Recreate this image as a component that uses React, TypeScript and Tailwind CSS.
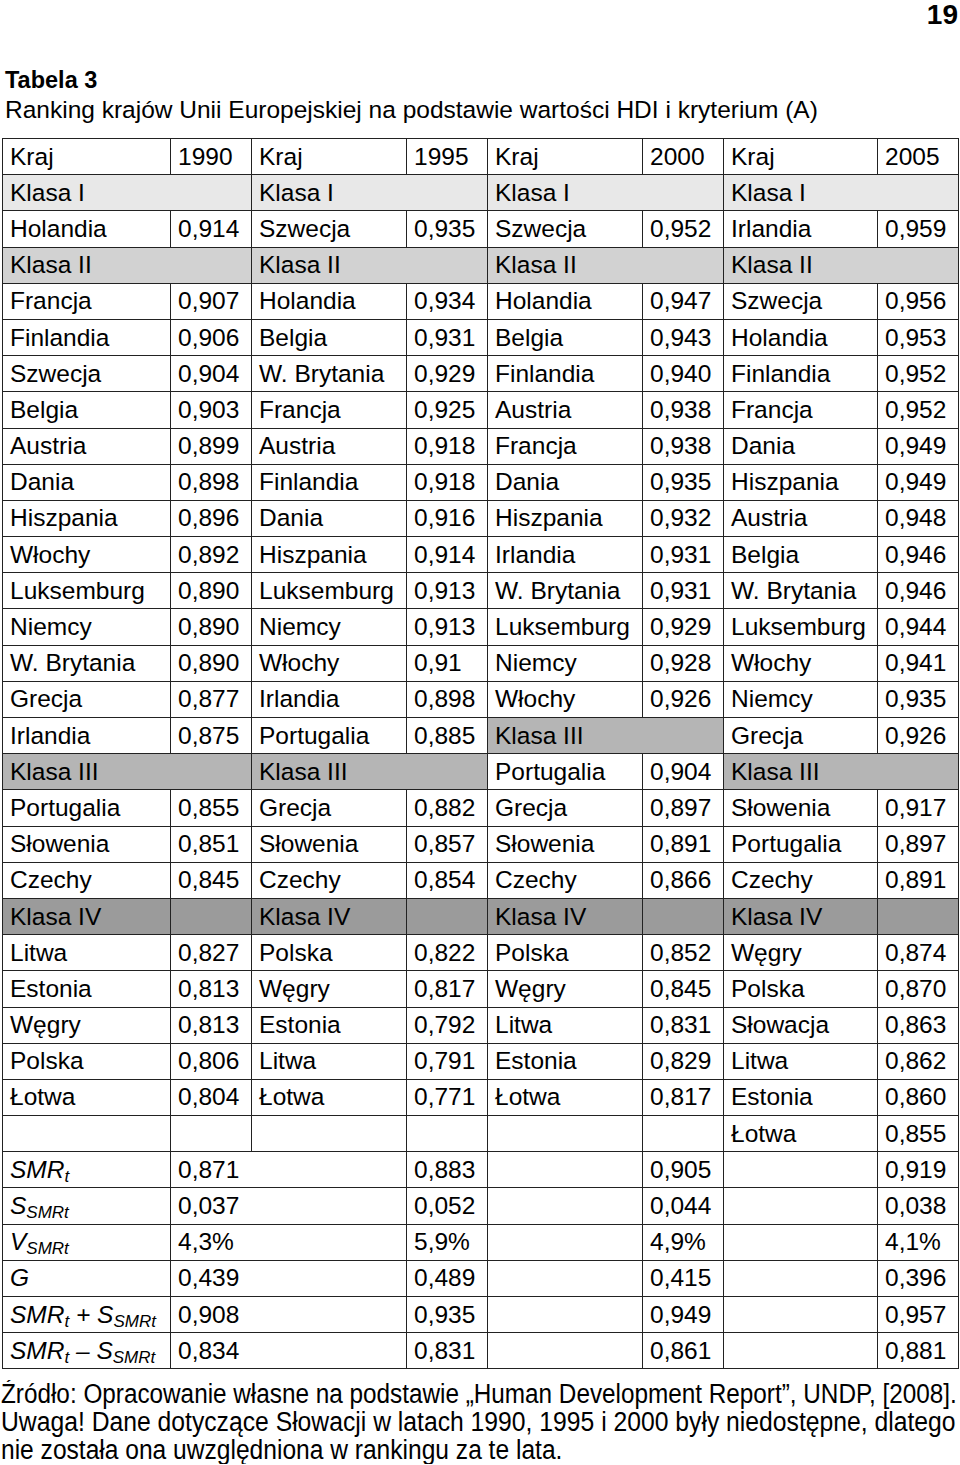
import type { ReactNode } from 'react';

type Cell = { t?: ReactNode; span?: number; bg?: string };

const K1 = 'bg-[#e8e8e8]';
const K2 = 'bg-[#d2d2d2]';
const K3 = 'bg-[#b5b5b5]';
const K4 = 'bg-[#9b9b9b]';

const plain = (...vals: string[]): Cell[] => vals.map((t) => ({ t }));
const klasa = (name: string, bg: string): Cell[] => [
  { t: name, span: 2, bg },
  { t: name, span: 2, bg },
  { t: name, span: 2, bg },
  { t: name, span: 2, bg },
];

const Sub = ({ children }: { children: ReactNode }) => (
  <sub className="text-[17px] italic">{children}</sub>
);

const SMRt = (
  <>
    SMR<Sub>t</Sub>
  </>
);
const SSMRt = (
  <>
    S<Sub>SMRt</Sub>
  </>
);

// wiersze statystyk: brak linii między 2. i 3. kolumną
const stat = (label: ReactNode, a: string, b: string, c: string, d: string): Cell[] => [
  { t: <span className="italic">{label}</span> },
  { t: a, span: 2 },
  { t: b },
  { t: '' },
  { t: c },
  { t: '' },
  { t: d },
];

const rows: Cell[][] = [
  plain('Kraj', '1990', 'Kraj', '1995', 'Kraj', '2000', 'Kraj', '2005'),
  klasa('Klasa I', K1),
  plain('Holandia', '0,914', 'Szwecja', '0,935', 'Szwecja', '0,952', 'Irlandia', '0,959'),
  klasa('Klasa II', K2),
  plain('Francja', '0,907', 'Holandia', '0,934', 'Holandia', '0,947', 'Szwecja', '0,956'),
  plain('Finlandia', '0,906', 'Belgia', '0,931', 'Belgia', '0,943', 'Holandia', '0,953'),
  plain('Szwecja', '0,904', 'W. Brytania', '0,929', 'Finlandia', '0,940', 'Finlandia', '0,952'),
  plain('Belgia', '0,903', 'Francja', '0,925', 'Austria', '0,938', 'Francja', '0,952'),
  plain('Austria', '0,899', 'Austria', '0,918', 'Francja', '0,938', 'Dania', '0,949'),
  plain('Dania', '0,898', 'Finlandia', '0,918', 'Dania', '0,935', 'Hiszpania', '0,949'),
  plain('Hiszpania', '0,896', 'Dania', '0,916', 'Hiszpania', '0,932', 'Austria', '0,948'),
  plain('Włochy', '0,892', 'Hiszpania', '0,914', 'Irlandia', '0,931', 'Belgia', '0,946'),
  plain('Luksemburg', '0,890', 'Luksemburg', '0,913', 'W. Brytania', '0,931', 'W. Brytania', '0,946'),
  plain('Niemcy', '0,890', 'Niemcy', '0,913', 'Luksemburg', '0,929', 'Luksemburg', '0,944'),
  plain('W. Brytania', '0,890', 'Włochy', '0,91', 'Niemcy', '0,928', 'Włochy', '0,941'),
  plain('Grecja', '0,877', 'Irlandia', '0,898', 'Włochy', '0,926', 'Niemcy', '0,935'),
  [
    ...plain('Irlandia', '0,875', 'Portugalia', '0,885'),
    { t: 'Klasa III', span: 2, bg: K3 },
    ...plain('Grecja', '0,926'),
  ],
  [
    { t: 'Klasa III', span: 2, bg: K3 },
    { t: 'Klasa III', span: 2, bg: K3 },
    ...plain('Portugalia', '0,904'),
    { t: 'Klasa III', span: 2, bg: K3 },
  ],
  plain('Portugalia', '0,855', 'Grecja', '0,882', 'Grecja', '0,897', 'Słowenia', '0,917'),
  plain('Słowenia', '0,851', 'Słowenia', '0,857', 'Słowenia', '0,891', 'Portugalia', '0,897'),
  plain('Czechy', '0,845', 'Czechy', '0,854', 'Czechy', '0,866', 'Czechy', '0,891'),
  [
    { t: 'Klasa IV', bg: K4 },
    { t: '', bg: K4 },
    { t: 'Klasa IV', bg: K4 },
    { t: '', bg: K4 },
    { t: 'Klasa IV', bg: K4 },
    { t: '', bg: K4 },
    { t: 'Klasa IV', bg: K4 },
    { t: '', bg: K4 },
  ],
  plain('Litwa', '0,827', 'Polska', '0,822', 'Polska', '0,852', 'Węgry', '0,874'),
  plain('Estonia', '0,813', 'Węgry', '0,817', 'Węgry', '0,845', 'Polska', '0,870'),
  plain('Węgry', '0,813', 'Estonia', '0,792', 'Litwa', '0,831', 'Słowacja', '0,863'),
  plain('Polska', '0,806', 'Litwa', '0,791', 'Estonia', '0,829', 'Litwa', '0,862'),
  plain('Łotwa', '0,804', 'Łotwa', '0,771', 'Łotwa', '0,817', 'Estonia', '0,860'),
  plain('', '', '', '', '', '', 'Łotwa', '0,855'),
  stat(SMRt, '0,871', '0,883', '0,905', '0,919'),
  stat(SSMRt, '0,037', '0,052', '0,044', '0,038'),
  stat(<>V<Sub>SMRt</Sub></>, '4,3%', '5,9%', '4,9%', '4,1%'),
  stat('G', '0,439', '0,489', '0,415', '0,396'),
  stat(<>{SMRt} + {SSMRt}</>, '0,908', '0,935', '0,949', '0,957'),
  stat(<>{SMRt} – {SSMRt}</>, '0,834', '0,831', '0,861', '0,881'),
];

const widths = [168, 81, 155, 81, 155, 81, 154, 81];

export default function App() {
  return (
    <div className="w-[960px] bg-white text-black font-['Liberation_Sans',Arial,sans-serif]">
      <div className="flex justify-end pr-[2px] text-[28px] font-bold leading-[30px]">19</div>

      <div className="pl-[5px] mt-[35px] text-[24px] leading-[30px]">
        <div className="font-bold text-[23.5px]">Tabela 3</div>
        <div className="text-[24.5px]">Ranking krajów Unii Europejskiej na podstawie wartości HDI i kryterium (A)</div>
      </div>

      <table className="mt-[13px] ml-[2px] w-[956px] table-fixed border-collapse text-[24.5px] leading-[24px]">
        <colgroup>
          {widths.map((w, i) => (
            <col key={i} style={{ width: w }} />
          ))}
        </colgroup>
        <tbody>
          {rows.map((row, r) => (
            <tr key={r} className="h-[36.2px]">
              {row.map((c, i) => (
                <td
                  key={i}
                  colSpan={c.span}
                  className={`border-[1.5px] border-[#222] px-[7px] py-0 whitespace-nowrap align-middle ${c.bg ?? 'bg-white'}`}
                >
                  {c.t}
                </td>
              ))}
            </tr>
          ))}
        </tbody>
      </table>

      <div className="mt-[11px] pl-[1px] overflow-hidden text-[27px] leading-[28px] whitespace-nowrap">
        <div className="origin-left scale-x-[0.9]">Źródło: Opracowanie własne na podstawie „Human Development Report”, UNDP, [2008].</div>
        <div className="origin-left scale-x-[0.915]">Uwaga! Dane dotyczące Słowacji w latach 1990, 1995 i 2000 były niedostępne, dlatego</div>
        <div className="origin-left scale-x-[0.91]">nie została ona uwzględniona w rankingu za te lata.</div>
      </div>
    </div>
  );
}
